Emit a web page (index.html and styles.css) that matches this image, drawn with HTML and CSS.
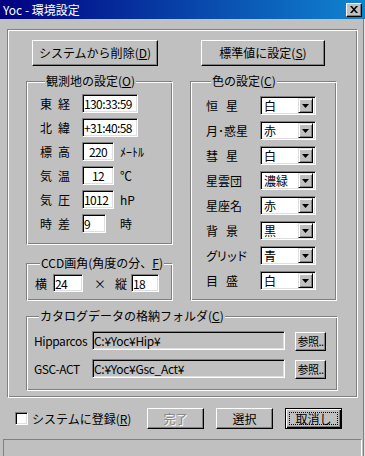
FILE: index.html
```html
<!DOCTYPE html>
<html lang="ja">
<head>
    <meta charset="UTF-8">
    <meta name="viewport" content="width=device-width, initial-scale=1.0">
    <title>Yoc - 環境設定</title>
    <link rel="stylesheet" href="styles.css">
</head>
<body>
    <div class="window">
        <div class="titlebar">
            <span class="title">Yoc - 環境設定</span>
            <span class="close">
                <svg width="8" height="7" viewBox="0 0 8 7"><path d="M0 0h2l2 2.2L6 0h2L5 3.5 8 7H6L4 4.8 2 7H0l3-3.5z" fill="#000"/></svg>
            </span>
        </div>
        <div class="client">
            <div class="frame">
                <div class="top-buttons">
                    <button class="btn remove">システムから削除(<u>D</u>)</button>
                    <button class="btn defaults">標準値に設定(<u>S</u>)</button>
                </div>

                <div class="columns">
                    <div class="left-col">
                        <fieldset class="group site">
                            <legend>観測地の設定(<u>O</u>)</legend>
                            <div class="row"><span class="lbl">東経</span><input class="field long" value="130:33:59"></div>
                            <div class="row"><span class="lbl">北緯</span><input class="field long" value="+31:40:58"></div>
                            <div class="row"><span class="lbl">標高</span><input class="field short center" value="220"><span class="unit">ﾒｰﾄﾙ</span></div>
                            <div class="row"><span class="lbl">気温</span><input class="field short center" value="12"><span class="unit">℃</span></div>
                            <div class="row"><span class="lbl">気圧</span><input class="field short" value="1012"><span class="unit">hP</span></div>
                            <div class="row"><span class="lbl">時差</span><input class="field tiny" value="9"><span class="unit tz">時</span></div>
                        </fieldset>

                        <fieldset class="group ccd">
                            <legend>CCD画角(角度の分、<u>F</u>)</legend>
                            <div class="ccd-row">
                                <span>横</span>
                                <input class="field ccd-w" value="24">
                                <span class="times">×</span>
                                <span>縦</span>
                                <input class="field ccd-h" value="18">
                            </div>
                        </fieldset>
                    </div>

                    <fieldset class="group colors">
                        <legend>色の設定(<u>C</u>)</legend>
                        <div class="row"><span class="clbl wide">恒星</span><div class="combo"><span class="value">白</span><span class="drop"><svg width="7" height="4" viewBox="0 0 7 4"><path d="M0 0h7L3.5 4z"/></svg></span></div></div>
                        <div class="row"><span class="clbl">月･惑星</span><div class="combo"><span class="value">赤</span><span class="drop"><svg width="7" height="4" viewBox="0 0 7 4"><path d="M0 0h7L3.5 4z"/></svg></span></div></div>
                        <div class="row"><span class="clbl wide">彗星</span><div class="combo"><span class="value">白</span><span class="drop"><svg width="7" height="4" viewBox="0 0 7 4"><path d="M0 0h7L3.5 4z"/></svg></span></div></div>
                        <div class="row"><span class="clbl">星雲団</span><div class="combo"><span class="value">濃緑</span><span class="drop"><svg width="7" height="4" viewBox="0 0 7 4"><path d="M0 0h7L3.5 4z"/></svg></span></div></div>
                        <div class="row"><span class="clbl">星座名</span><div class="combo"><span class="value">赤</span><span class="drop"><svg width="7" height="4" viewBox="0 0 7 4"><path d="M0 0h7L3.5 4z"/></svg></span></div></div>
                        <div class="row"><span class="clbl wide">背景</span><div class="combo"><span class="value">黒</span><span class="drop"><svg width="7" height="4" viewBox="0 0 7 4"><path d="M0 0h7L3.5 4z"/></svg></span></div></div>
                        <div class="row"><span class="clbl kana">グリッド</span><div class="combo"><span class="value">青</span><span class="drop"><svg width="7" height="4" viewBox="0 0 7 4"><path d="M0 0h7L3.5 4z"/></svg></span></div></div>
                        <div class="row"><span class="clbl wide">目盛</span><div class="combo"><span class="value">白</span><span class="drop"><svg width="7" height="4" viewBox="0 0 7 4"><path d="M0 0h7L3.5 4z"/></svg></span></div></div>
                    </fieldset>
                </div>

                <fieldset class="group catalog">
                    <legend>カタログデータの格納フォルダ(<u>C</u>)</legend>
                    <div class="path-row">
                        <span class="plbl">Hipparcos</span>
                        <input class="field path" value="C:¥Yoc¥Hip¥" readonly>
                        <button class="btn browse">参照..</button>
                    </div>
                    <div class="path-row">
                        <span class="plbl">GSC-ACT</span>
                        <input class="field path" value="C:¥Yoc¥Gsc_Act¥" readonly>
                        <button class="btn browse">参照..</button>
                    </div>
                </fieldset>
            </div>

            <div class="bottom">
                <label class="check"><span class="box"></span><span>システムに登録(<u>R</u>)</span></label>
                <div class="actions">
                    <button class="btn disabled">完了</button>
                    <button class="btn">選択</button>
                    <button class="btn default"><span class="focus">取消し</span></button>
                </div>
            </div>

            <div class="status"></div>
        </div>
    </div>
</body>
</html>
```

FILE: styles.css
```css
* {
    box-sizing: border-box;
}
body {
    margin: 0;
    background-color: #c0c0c0;
    font-family: "Noto Sans CJK JP", "Noto Sans", sans-serif;
    font-size: 12px;
    color: #000;
}
.window {
    width: 365px;
    height: 456px;
    overflow: hidden;
    display: flex;
    flex-direction: column;
}
.titlebar {
    height: 19px;
    flex: none;
    display: flex;
    align-items: center;
    justify-content: space-between;
    padding: 0 3px 0 3px;
    background: linear-gradient(to right, #000080, #1084d0);
    color: #fff;
}
.title {
    line-height: 19px;
}
.close {
    width: 16px;
    height: 14px;
    display: flex;
    align-items: center;
    justify-content: center;
    background-color: #c0c0c0;
    border-top: 1px solid #fff;
    border-left: 1px solid #fff;
    border-right: 1px solid #000;
    border-bottom: 1px solid #000;
    box-shadow: inset -1px -1px 0 #808080;
}
.client {
    flex: 1;
    display: flex;
    flex-direction: column;
    padding-top: 10px;
    box-shadow: inset -1px 0 0 #dfdfdf, inset -2px 0 0 #808080;
}

/* etched boxes */
.frame, .group {
    border: 1px solid;
    border-color: #808080 #fff #fff #808080;
    box-shadow: inset 1px 1px 0 #fff, inset -1px -1px 0 #808080;
}
.frame {
    margin-left: 7px;
    width: 351px;
    height: 369px;
    padding: 10px 0 0 0;
}
.group {
    margin: 0;
    padding: 0;
    min-width: 0;
}
legend {
    margin-left: 5px;
    padding: 0 1px;
    line-height: 14px;
    background-color: #c0c0c0;
}

/* buttons */
.btn {
    font: inherit;
    color: #000;
    background-color: #c0c0c0;
    border-top: 1px solid #fff;
    border-left: 1px solid #fff;
    border-right: 1px solid #000;
    border-bottom: 1px solid #000;
    box-shadow: inset -1px -1px 0 #808080;
    padding: 0;
    line-height: 14px;
}
.top-buttons {
    display: flex;
    gap: 43px;
    padding-left: 24px;
}
.top-buttons .btn {
    height: 26px;
}
.remove {
    width: 126px;
}
.defaults {
    width: 124px;
}

.columns {
    display: flex;
    gap: 17px;
    padding-left: 18px;
    margin-top: 8px;
}
.left-col {
    display: flex;
    flex-direction: column;
    gap: 11px;
}

/* text fields */
.field {
    font: inherit;
    color: #000;
    letter-spacing: -0.6px;
    height: 19px;
    padding: 0 1px;
    background-color: #fff;
    border-top: 1px solid #808080;
    border-left: 1px solid #808080;
    border-right: 1px solid #fff;
    border-bottom: 1px solid #fff;
    box-shadow: inset 1px 1px 0 #000, inset -1px -1px 0 #dfdfdf;
    outline: none;
}
.center {
    text-align: center;
}
.long {
    width: 56px;
}
.short {
    width: 32px;
}
.tiny {
    width: 24px;
}

.row {
    display: flex;
    align-items: center;
    height: 19px;
}
.site {
    width: 147px;
    height: 171px;
    padding: 6px 0 0 13px;
    display: flex;
    flex-direction: column;
    gap: 5px;
}
.lbl {
    width: 42px;
    letter-spacing: 6px;
}
.unit {
    margin-left: 6px;
}
.unit.tz {
    margin-left: 14px;
}

.ccd {
    width: 147px;
    height: 45px;
    padding: 4px 0 0 8px;
}
.ccd-row {
    display: flex;
    align-items: center;
}
.ccd-row .field {
    height: 18px;
    margin-left: 6px;
}
.ccd-w {
    width: 30px;
}
.ccd-h {
    width: 28px;
    margin-left: 4px !important;
}
.times {
    margin: 0 9px 0 11px;
}

.colors {
    width: 147px;
    height: 227px;
    padding: 8px 0 0 15px;
    display: flex;
    flex-direction: column;
    gap: 6px;
}
.clbl {
    width: 54px;
}
.clbl.wide {
    letter-spacing: 8px;
}
.clbl.kana {
    letter-spacing: -2px;
}
.combo {
    width: 56px;
    height: 19px;
    display: flex;
    align-items: center;
    justify-content: space-between;
    padding: 2px;
    background-color: #fff;
    border-top: 1px solid #808080;
    border-left: 1px solid #808080;
    border-right: 1px solid #fff;
    border-bottom: 1px solid #fff;
    box-shadow: inset 1px 1px 0 #000, inset -1px -1px 0 #dfdfdf;
}
.value {
    padding-left: 1px;
    line-height: 15px;
}
.drop {
    width: 15px;
    height: 15px;
    display: flex;
    align-items: center;
    justify-content: center;
    background-color: #c0c0c0;
    border-top: 1px solid #dfdfdf;
    border-left: 1px solid #dfdfdf;
    border-right: 1px solid #000;
    border-bottom: 1px solid #000;
    box-shadow: inset 1px 1px 0 #fff, inset -1px -1px 0 #808080;
}

.catalog {
    width: 312px;
    height: 82px;
    margin: 8px 0 0 18px;
    padding: 7px 0 0 7px;
    display: flex;
    flex-direction: column;
    gap: 8px;
}
.path-row {
    display: flex;
    align-items: center;
    height: 20px;
}
.plbl {
    width: 58px;
    letter-spacing: -0.4px;
}
.field.path {
    width: 193px;
    letter-spacing: -0.3px;
    background-color: #c0c0c0;
}
.browse {
    width: 31px;
    height: 19px;
    margin-left: 10px;
    margin-top: 2px;
    font-size: 11px;
    letter-spacing: -0.5px;
    white-space: nowrap;
    overflow: hidden;
}

/* bottom row */
.bottom {
    display: flex;
    align-items: center;
    height: 21px;
    margin-top: 10px;
    padding: 0 23px 0 15px;
}
.check {
    display: flex;
    align-items: center;
    gap: 4px;
}
.box {
    width: 13px;
    height: 13px;
    background-color: #fff;
    border-top: 1px solid #808080;
    border-left: 1px solid #808080;
    border-right: 1px solid #fff;
    border-bottom: 1px solid #fff;
    box-shadow: inset 1px 1px 0 #000, inset -1px -1px 0 #dfdfdf;
}
.actions {
    margin-left: auto;
    display: flex;
    gap: 12px;
}
.actions .btn {
    width: 57px;
    height: 21px;
}
.btn.disabled {
    color: #808080;
    text-shadow: 1px 1px 0 #fff;
}
.btn.default {
    border: 1px solid #000;
    box-shadow: inset 1px 1px 0 #fff, inset -1px -1px 0 #000, inset -2px -2px 0 #808080;
    padding: 3px;
}
.focus {
    display: block;
    height: 100%;
    border: 1px dotted #000;
    line-height: 11px;
}

.status {
    flex: 1;
    margin: 10px 3px 0 3px;
    border-top: 1px solid #808080;
    border-left: 1px solid #808080;
    border-right: 1px solid #fff;
}
```
